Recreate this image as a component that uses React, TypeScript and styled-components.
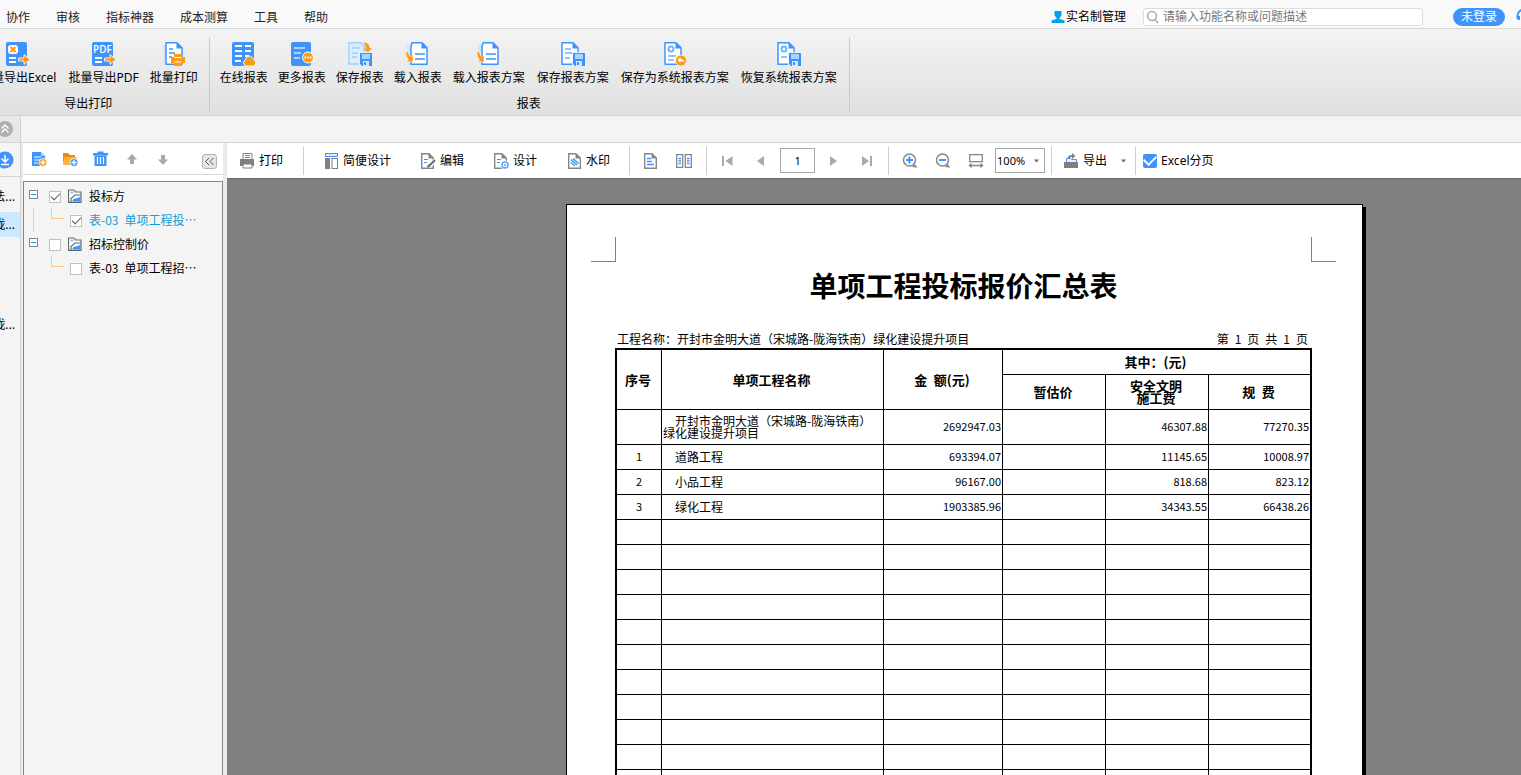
import React from 'react';
import styled, { createGlobalStyle } from 'styled-components';

const BLUE = '#3f94fb';
const ORANGE = '#ff9a14';
const GREY = '#808080';
const MUTED = '#a9a9a9';

const GlobalStyle = createGlobalStyle`
  * { box-sizing: border-box; }
  body {
    margin: 0;
    font: 12px/16px "Noto Sans", "Noto Sans CJK SC", sans-serif;
    color: #000;
    background: #f4f4f4;
  }
  button, input, select { font: inherit; color: inherit; }
  svg { display: block; flex: none; }
`;

const App = styled.div`
  display: flex;
  flex-direction: column;
  height: 100vh;
  overflow: hidden;
`;

/* ---------- menu bar ---------- */

const MenuBar = styled.header`
  display: flex;
  align-items: flex-start;
  flex: none;
  height: 29px;
  padding-top: 8px;
  background: #f9f9f9;
  border-bottom: 1px solid #d6d6d6;
  overflow: hidden;
`;

const Menus = styled.nav`
  display: flex;
  gap: 26px;
  padding: 2px 0 0 6px;
`;

const PlainButton = styled.button`
  flex: none;
  padding: 0;
  border: 0;
  background: none;
  white-space: nowrap;
`;

const MenuButton = styled(PlainButton)`
  color: #222;
`;

const Account = styled.div`
  display: flex;
  align-items: center;
  height: 18px;
  margin: 0 -11px 0 auto;
`;

const RealNameLink = styled.a`
  display: flex;
  align-items: center;
  gap: 1px;
  margin-right: 17px;
  color: #000;
  text-decoration: none;
  white-space: nowrap;
`;

const SearchBox = styled.label`
  display: flex;
  align-items: center;
  gap: 3px;
  width: 280px;
  height: 18px;
  padding-left: 2px;
  margin-right: 30px;
  border: 1px solid #dcdcdc;
  border-radius: 3px;
  background: #fff;
`;

const SearchInput = styled.input`
  flex: 1;
  min-width: 0;
  height: 16px;
  padding: 0;
  border: 0;
  outline: 0;
  background: none;
  &::placeholder { color: #777; }
`;

const LoginButton = styled.button`
  width: 52px;
  height: 18px;
  margin-right: 11px;
  padding: 0;
  border: 0;
  border-radius: 9px;
  background: ${BLUE};
  color: #fff;
`;

/* ---------- ribbon ---------- */

const Ribbon = styled.div`
  display: flex;
  flex: none;
  height: 87px;
  padding: 8px 0 3px;
  background: linear-gradient(#f3f3f3, #e0e0e0);
  border-bottom: 1px solid #cfcfcf;
  overflow: hidden;
`;

const RibbonGroup = styled.section<{ $scrolled?: boolean }>`
  display: flex;
  flex: none;
  flex-direction: column;
  align-items: center;
  margin-left: ${(p) => (p.$scrolled ? '-31px' : '0')};
  padding: 5px 6px 0 5px;
  border-right: 1px solid #cacaca;
`;

const RibbonButtons = styled.div`
  display: flex;
  margin-bottom: 10px;
`;

const RibbonButton = styled(PlainButton)<{ $wide?: boolean }>`
  display: flex;
  flex-direction: column;
  align-items: center;
  gap: 4px;
  padding: 0 ${(p) => (p.$wide ? 6 : 5)}px;
`;

/* ---------- work area ---------- */

const TabStrip = styled.div`
  display: flex;
  flex: none;
  height: 27px;
  border-bottom: 1px solid #d3d3d3;
  background: #f4f4f4;
`;

const RailToggle = styled.button`
  display: flex;
  align-items: center;
  justify-content: flex-end;
  width: 21px;
  padding: 0 6px 0 0;
  border: 0;
  border-right: 1px solid #d3d3d3;
  background: #e8e8e8;
  overflow: hidden;
`;

const WorkArea = styled.div`
  display: flex;
  flex: 1;
  min-height: 0;
`;

const Rail = styled.aside`
  flex: none;
  width: 21px;
  border-right: 1px solid #d3d3d3;
  overflow: hidden;
`;

const RailHead = styled.div`
  display: flex;
  align-items: center;
  justify-content: flex-end;
  height: 34px;
  padding-right: 6px;
  border-bottom: 1px solid #d3d3d3;
`;

const RailItem = styled.button<{ $selected?: boolean; $gap?: number }>`
  display: flex;
  align-items: center;
  justify-content: flex-end;
  width: 100%;
  height: 25px;
  margin-top: ${(p) => p.$gap ?? 0}px;
  padding: 1px 5px 0 0;
  border: 0;
  background: ${(p) => (p.$selected ? '#cce8ff' : 'none')};
  white-space: nowrap;
`;

const SidePanel = styled.aside`
  display: flex;
  flex: none;
  flex-direction: column;
  width: 206px;
  padding: 0 4px 0 2px;
  background: #ebebeb;
`;

const PanelTools = styled.div`
  display: flex;
  align-items: center;
  gap: 15px;
  flex: none;
  height: 32px;
  padding: 0 6px 0 8px;
  background: #fff;
  border-bottom: 1px solid #d8d8d8;
`;

const CollapseButton = styled.button`
  display: grid;
  place-items: center;
  align-self: flex-end;
  width: 15px;
  height: 15px;
  margin: 0 0 5px auto;
  padding: 0;
  border: 1px solid #b4b4b4;
  border-radius: 3px;
  background: #e6e6e6;
`;

const TreeFrame = styled.div`
  display: flex;
  flex: 1;
  min-height: 0;
  padding-top: 6px;
  background: #fff;
`;

const Tree = styled.ul`
  flex: 1;
  margin: 0;
  padding: 2px 0;
  border: 1px solid #828790;
  border-bottom: 0;
  background: #f4f4f4;
  list-style: none;
  font-family: "Noto Sans CJK SC", sans-serif;
`;

const SubTree = styled.ul`
  margin: 0;
  padding: 0;
  list-style: none;
`;

const TreeRow = styled.div<{ $child?: boolean }>`
  display: flex;
  align-items: center;
  height: 24px;
  padding-left: ${(p) => (p.$child ? 9 : 5)}px;
  white-space: nowrap;
`;

const Expander = styled.button`
  display: grid;
  place-items: center;
  width: 9px;
  height: 9px;
  margin: 0 11px 3px 0;
  padding: 0;
  border: 1px solid #7d8a93;
  background: #fff;
  &::before { content: ""; width: 5px; height: 1px; background: #1a9ad0; }
`;

const Trunk = styled.span<{ $visible: boolean }>`
  width: 1px;
  height: 24px;
  margin-right: 17px;
  background: ${(p) => (p.$visible ? '#ffc980' : 'transparent')};
`;

const Elbow = styled.span`
  align-self: flex-start;
  width: 13px;
  height: 11px;
  margin-right: 6px;
  border: solid #ffc980;
  border-width: 0 0 1px 1px;
`;

const TreeLabel = styled.label<{ $active?: boolean }>`
  display: flex;
  align-items: center;
  gap: 7px;
  color: ${(p) => (p.$active ? '#0aa1d9' : '#000')};
`;

const TreeCheck = styled.input`
  appearance: none;
  display: grid;
  place-items: center;
  flex: none;
  width: 12px;
  height: 12px;
  margin: 1px 0 0;
  border: 1px solid #c0c0c0;
  background: #fff;
  &:checked::before {
    content: "";
    width: 8px;
    height: 4px;
    margin-bottom: 2px;
    border: solid #555;
    border-width: 0 0 1px 1px;
    transform: rotate(-45deg);
  }
`;

/* ---------- report viewer ---------- */

const Viewer = styled.main`
  display: flex;
  flex: 1;
  flex-direction: column;
  min-width: 0;
`;

const ViewerTools = styled.div`
  display: flex;
  flex: none;
  height: 36px;
  padding: 3px 0;
  background: #fff;
  border-bottom: 1px solid #666;
  overflow: hidden;
`;

const ToolGroup = styled.div<{ $gap?: number; $left: number; $right?: number; $last?: boolean }>`
  display: flex;
  align-items: center;
  flex: none;
  gap: ${(p) => p.$gap ?? 0}px;
  padding: 0 ${(p) => p.$right ?? 0}px 0 ${(p) => p.$left}px;
  border-right: ${(p) => (p.$last ? 0 : 1)}px solid #cfcfcf;
`;

const IconPair = styled.div`
  display: flex;
  gap: 17px;
`;

const ToolButton = styled(PlainButton)`
  display: flex;
  align-items: center;
  gap: 4px;
`;

const PageInput = styled.input`
  width: 35px;
  height: 25px;
  padding: 0;
  border: 1px solid #a6a6a6;
  text-align: center;
  font-size: 11px;
`;

const ZoomField = styled.div`
  display: flex;
  align-items: center;
  width: 50px;
  height: 25px;
  padding-right: 5px;
  border: 1px solid #a6a6a6;
`;

const ZoomSelect = styled.select`
  appearance: none;
  flex: 1;
  min-width: 0;
  padding: 0 0 0 1px;
  border: 0;
  background: none;
  font-size: 11px;
`;

const ExcelLabel = styled.label`
  display: flex;
  align-items: center;
  gap: 4px;
`;

const ExcelCheck = styled.input`
  appearance: none;
  display: grid;
  place-items: center;
  width: 14px;
  height: 14px;
  margin: 0;
  border-radius: 2px;
  background: ${BLUE};
  &:checked::before {
    content: "";
    width: 10px;
    height: 6px;
    margin-bottom: 3px;
    border: solid #fff;
    border-width: 0 0 2px 2px;
    transform: rotate(-45deg);
  }
`;

const Canvas = styled.div`
  flex: 1;
  min-height: 0;
  padding: 25px 0 0 339px;
  background: #808080;
  overflow: hidden;
`;

const Sheet = styled.article`
  width: 797px;
  padding: 32px 26px 24px 24px;
  border: 1px solid #000;
  background: #fff;
  box-shadow: 3px 3px 0 #000;
  font-family: "Noto Sans CJK SC", sans-serif;
`;

const CropMarks = styled.div`
  display: flex;
  justify-content: space-between;
`;

const CropMark = styled.span<{ $side: 'left' | 'right' }>`
  width: 25px;
  height: 25px;
  border-bottom: 1px solid #808080;
  border-${(p) => (p.$side === 'left' ? 'right' : 'left')}: 1px solid #808080;
`;

const Title = styled.h1`
  margin: 3px 0 0;
  font-size: 28px;
  line-height: 40px;
  font-weight: 700;
  text-align: center;
`;

const InfoLine = styled.div`
  display: flex;
  justify-content: space-between;
  margin: 26px 28px 1px 26px;
`;

const Report = styled.table`
  width: 697px;
  margin-left: 24px;
  border: 2px solid #000;
  border-spacing: 0;
  table-layout: fixed;
  line-height: 12px;
`;

const Cell = styled.td<{ $align?: string; $small?: boolean }>`
  padding: 0 1px ${(p) => (p.$small ? 2 : 0)}px;
  border: solid #000;
  border-width: 0 1px 1px 0;
  text-align: ${(p) => p.$align ?? 'left'};
  font-size: ${(p) => (p.$small ? 11 : 12)}px;
  &:last-child { border-right: 0; }
`;

const HeadCell = styled.th<{ $edge?: boolean }>`
  padding: 0 2px 0 0;
  border: solid #000;
  border-width: 0 ${(p) => (p.$edge ? 0 : 1)}px 1px 0;
  font-size: 13px;
  font-weight: 700;
`;

const Row = styled.tr<{ $tall?: boolean }>`
  height: ${(p) => (p.$tall ? 35 : 25)}px;
`;

/* ---------- icons ---------- */

const Svg = ({ size = 16, children }: { size?: number; children: React.ReactNode }) => (
  <svg width={size} height={size} viewBox={`0 0 ${size} ${size}`} fill="none" aria-hidden="true">
    {children}
  </svg>
);

const OutArrow = () => (
  <path d="M12.500 16H18v-3.500l6 5-6 5V19h-5.500z" fill={ORANGE} stroke="#ececec" />
);

const Floppy = () => (
  <g>
    <rect x="11" y="10" width="13" height="14" fill="#e6f2ff" />
    <path d="M12 11h12v13H14l-2-2z" fill={BLUE} />
    <rect x="14" y="12" width="8" height="5" fill="#a6d3ff" />
    <rect x="15" y="19" width="6" height="5" fill="#d3e9ff" />
    <rect x="16" y="20" width="2" height="3" fill={BLUE} />
  </g>
);

const DocOutline = ({ x = 1 }: { x?: number }) => (
  <g transform={`translate(${x} 0)`}>
    <path d="M1 .8h11l5 5V22.200H1z" fill="#fff" stroke={BLUE} strokeWidth="1.500" strokeLinejoin="round" />
    <path d="M11.500.5v6H17.500z" fill={BLUE} />
  </g>
);

const ExcelOutIcon = () => (
  <Svg size={24}>
    <rect x="0" y="0" width="21" height="24" rx="2" fill={BLUE} />
    <rect x="2" y="3" width="10" height="9" rx="3" fill="#fff" />
    <path d="M4.500 5l5 5m0-5l-5 5" stroke={ORANGE} strokeWidth="2.200" />
    <path d="M3 16h7M3 20h7" stroke="#fff" strokeWidth="2" />
    <OutArrow />
  </Svg>
);

const PdfOutIcon = () => (
  <Svg size={24}>
    <rect x="0" y="0" width="21" height="24" rx="2" fill={BLUE} />
    <text x="10.500" y="11" fontSize="10" fontWeight="600" fill="#fff" textAnchor="middle" fontFamily="Open Sans, sans-serif">PDF</text>
    <path d="M3 16h7M3 20h7" stroke="#fff" strokeWidth="2" />
    <OutArrow />
  </Svg>
);

const BatchPrintIcon = () => (
  <Svg size={24}>
    <path d="M1 3h3v18H1z" fill="#cfe7ff" />
    <DocOutline x={3} />
    <path d="M7 7h4M7 11h6M7 15h3" stroke={BLUE} strokeWidth="1.500" />
    <path d="M12 12h8v3h3v6h-3v3h-8v-3H9v-6h3z" fill={ORANGE} />
    <path d="M12.500 15.500h7M12.500 20h7" stroke="#fff" />
  </Svg>
);

const OnlineIcon = () => (
  <Svg size={24}>
    <rect x="0" y="0" width="22" height="24" rx="2" fill={BLUE} />
    <path d="M3 4h7M13 4h6M3 9h7M13 9h6M3 14h7M13 14h4M3 19h6" stroke="#fff" strokeWidth="2" />
    <path d="M14 24a3.500 3.500 0 0 1-.5-6.500c1-4.500 7-4.500 8 0A3.500 3.500 0 0 1 21.500 24z" fill={ORANGE} stroke="#e9f3ff" />
  </Svg>
);

const MoreIcon = () => (
  <Svg size={24}>
    <rect x="1" y="0" width="20" height="24" rx="2" fill={BLUE} />
    <path d="M4 6h11M4 11h7M4 16h6" stroke="#cfe7ff" strokeWidth="1.500" />
    <circle cx="18" cy="15.500" r="5.500" fill={ORANGE} stroke="#fff" />
    <path d="M14.500 15.500h7" stroke="#fff" strokeWidth="2" strokeDasharray="1.500 1.200" />
  </Svg>
);

const SaveReportIcon = () => (
  <Svg size={24}>
    <path d="M1 .8h12l3 3V22H1z" fill="#dbeeff" stroke="#9fd0ff" strokeWidth="1.400" />
    <path d="M4 6h8M4 11h6M4 15h5" stroke="#9fd0ff" strokeWidth="1.500" />
    <path d="M15.500.5c4.500 0 6 2.500 6 5.500H24l-4 4.500L15 7h2.500c.5-2 0-4-2-6.500z" fill={ORANGE} />
    <Floppy />
  </Svg>
);

const LoadIcon = () => (
  <Svg size={24}>
    <path d="M1 2h4v9H1zM2 20h4v3H2z" fill="#cfe7ff" />
    <g transform="translate(4 0)">
      <path d="M2 .8h10l5 5V22.200H1V5z" fill="#fff" stroke={BLUE} strokeWidth="1.500" strokeLinejoin="round" />
      <path d="M11.500.5v6H17.500z" fill={BLUE} />
    </g>
    <path d="M9 12h10M9 17h10" stroke={BLUE} strokeWidth="1.600" />
    <path d="M0 10l2.500-.5c0 3 1 4.500 3 5l1.500-2V20l-7-.5 2.500-2C.5 16 0 13 0 10z" fill={ORANGE} stroke="#fff" strokeWidth=".5" />
  </Svg>
);

const SaveSchemeIcon = () => (
  <Svg size={24}>
    <DocOutline x={0} />
    <path d="M4 7h6M4 11h7M4 16h5" stroke="#6db1ff" strokeWidth="1.500" />
    <Floppy />
  </Svg>
);

const SystemSchemeIcon = () => (
  <Svg size={24}>
    <DocOutline />
    <circle cx="8" cy="7" r="2.500" stroke="#6db1ff" strokeWidth="2" />
    <path d="M5 14h8M5 18h6" stroke="#6db1ff" strokeWidth="1.500" />
    <circle cx="18" cy="18.500" r="5.500" fill={ORANGE} stroke="#fff" strokeWidth=".6" />
    <path d="M14.500 18l3-3v2c2 0 4 1 4 4-1-1.500-2-2-4-2v2z" fill="#fff" />
  </Svg>
);

const RestoreSchemeIcon = () => (
  <Svg size={24}>
    <DocOutline x={0} />
    <circle cx="7" cy="7" r="2.500" stroke="#6db1ff" strokeWidth="2" />
    <path d="M4 15h6" stroke="#6db1ff" strokeWidth="1.500" />
    <Floppy />
  </Svg>
);

const PersonIcon = () => (
  <svg width="14" height="14" viewBox="0 0 14 14" fill="#00a2e8" aria-hidden="true">
    <path d="M3.500 1h7v4.500l-2 2.500v1l5 1.500V13H.5v-2.500L5.500 9V8l-2-2.500z" />
  </svg>
);

const SearchIcon = () => (
  <svg width="14" height="14" viewBox="0 0 14 14" fill="none" stroke="#aaa" strokeWidth="1.500" aria-hidden="true">
    <circle cx="6" cy="6" r="4.500" />
    <path d="M9 9.500l3 3.500" />
  </svg>
);

const HeadsetIcon = () => (
  <Svg>
    <path d="M1.500 10V7a6.500 6.500 0 0 1 13 0v3" stroke={BLUE} strokeWidth="2" />
    <path d="M1 7h3v4H2z" fill={BLUE} />
  </Svg>
);

const CircleUpIcon = () => (
  <svg width="18" height="18" viewBox="0 0 18 18" fill="none" aria-hidden="true">
    <circle cx="9" cy="9" r="8" fill="#b0b0b0" />
    <path d="M5.500 8.500L9 5l3.500 3.500M5.500 12.500L9 9l3.500 3.500" stroke="#fff" strokeWidth="1.400" />
  </svg>
);

const CircleDownIcon = () => (
  <svg width="18" height="18" viewBox="0 0 18 18" fill="none" aria-hidden="true">
    <circle cx="9" cy="9" r="8.500" fill={BLUE} />
    <path d="M9 4v7M5.500 7.500L9 11l3.500-3.500M5 13.500h8" stroke="#fff" strokeWidth="1.500" />
  </svg>
);

const PlusBadge = ({ color }: { color: string }) => (
  <g>
    <circle cx="12" cy="11.500" r="4" fill={color} stroke="#fff" strokeWidth=".8" />
    <path d="M12 9v5M9.500 11.500h5" stroke="#fff" strokeWidth="1.300" />
  </g>
);

const AddDocIcon = () => (
  <Svg>
    <path d="M1 1h9l4 4v10H1z" fill={BLUE} />
    <path d="M10 1v4h4z" fill="#a6d3ff" />
    <path d="M3 6h7M3 9h6M3 12h4" stroke="#fff" />
    <PlusBadge color={ORANGE} />
  </Svg>
);

const AddFolderIcon = () => (
  <Svg>
    <path d="M1 2h5l2 2h5v2H3L1 13z" fill="#f08a00" />
    <path d="M3 6h12l-2 8H1z" fill="#ffb13c" />
    <PlusBadge color={BLUE} />
  </Svg>
);

const TrashIcon = () => (
  <Svg>
    <path d="M4.500.5h6V2H15v2.500H0V2h4.500z" fill={BLUE} />
    <path d="M1.500 4.500h12V15h-12z" fill={BLUE} />
    <path d="M4.500 6v7M7.500 6v7M10.500 6v7" stroke="#fff" strokeWidth="1.200" />
  </Svg>
);

const ArrowUpIcon = () => (
  <Svg>
    <path d="M8 3l5 5.500h-3V13H6V8.500H3z" fill="#a8a8a8" />
  </Svg>
);

const ArrowDownIcon = () => (
  <Svg>
    <path d="M8 14l5-5.500h-3V4H6v4.500H3z" fill="#a8a8a8" />
  </Svg>
);

const ChevronsLeftIcon = () => (
  <svg width="11" height="11" viewBox="0 0 11 11" fill="none" stroke="#555" aria-hidden="true">
    <path d="M5 2L1.500 5.500 5 9M9.500 2L6 5.500 9.500 9" />
  </svg>
);

const BookIcon = () => (
  <svg width="14" height="14" viewBox="0 0 14 14" fill="none" aria-hidden="true">
    <path d="M.6 12.500V1H6l1.500 2H13v10.400H.6z" fill="#fff" stroke="#5d6670" strokeWidth="1.100" />
    <path d="M2.500 3.500h3" stroke="#8fc5ff" strokeWidth="2" />
    <path d="M3 13V9.500L7 6h6" stroke="#5d6670" strokeWidth="1.100" />
    <path d="M4.500 12.500c0-2.500 1.500-3 3.500-3 1.500 0 2-1.500 4.500-1.500v4.500z" fill={BLUE} />
  </svg>
);

const PrintIcon = () => (
  <Svg>
    <path d="M4 .5h9V7H4z" fill="#fff" stroke={GREY} />
    <path d="M6 2.500h5M6 4.500h5" stroke={BLUE} />
    <path d="M1 6h14v7H1z" fill={GREY} />
    <path d="M4 11h9v4H4z" fill="#fff" stroke={GREY} />
  </Svg>
);

const SimpleDesignIcon = () => (
  <Svg>
    <rect x="2.500" y=".5" width="12" height="3" fill="#d6eaff" stroke={BLUE} />
    <rect x="2" y="5" width="5" height="11" fill={GREY} />
    <rect x="9" y="5.500" width="5.500" height="10" stroke={GREY} />
  </Svg>
);

const GreyDoc = () => (
  <g>
    <path d="M1.700.7H9l4.300 4.300v10.300H1.700z" fill="#fff" stroke="#868686" strokeWidth="1.400" />
    <path d="M8.500.5V5.500h5z" fill="#868686" />
  </g>
);

const EditIcon = () => (
  <Svg>
    <GreyDoc />
    <path d="M4 6.500h4M4 9.500h3" stroke={BLUE} />
    <path d="M15 7.500L9 13.500" stroke="#fff" strokeWidth="4" />
    <path d="M15 7L9.500 12.500 7.500 14" stroke="#6e6e6e" strokeWidth="2.200" />
  </Svg>
);

const DesignIcon = () => (
  <Svg>
    <GreyDoc />
    <path d="M4 6.500h4M4 9.500h3" stroke={BLUE} />
    <circle cx="12" cy="12" r="4.500" fill="#fff" />
    <circle cx="12" cy="12" r="3" stroke="#55a5ff" strokeWidth="1.500" />
    <circle cx="12" cy="12" r="1" fill="#55a5ff" />
  </Svg>
);

const WatermarkIcon = () => (
  <Svg>
    <g transform="translate(1 0)">
      <GreyDoc />
      <path d="M6 5.500l5.500 5M4 6.500l6 5.500M4 9.500l4 3.500" stroke={BLUE} strokeWidth="1.500" />
    </g>
  </Svg>
);

const SinglePageIcon = () => (
  <Svg>
    <GreyDoc />
    <path d="M4 5.500h4M4 8.500h5M4 11.500h7" stroke={BLUE} strokeWidth="1.500" />
  </Svg>
);

const TwoPageIcon = () => (
  <Svg>
    <path d="M.7 1.700h6v12.600h-6zM9.300 1.700h6v12.600h-6z" stroke="#868686" strokeWidth="1.300" />
    <path d="M2.500 5.500h2.500M2.500 8h2.500M2.500 10.500h2.500M11 5.500h2.500M11 8h2.500M11 10.500h2.500" stroke={BLUE} strokeWidth="1.300" />
  </Svg>
);

const FirstIcon = () => (
  <Svg>
    <path d="M12.500 3v10L5.500 8zM2 3h2v10H2z" fill={MUTED} />
  </Svg>
);
const PrevIcon = () => (
  <Svg>
    <path d="M11 3v10L4 8z" fill={MUTED} />
  </Svg>
);
const NextIcon = () => (
  <Svg>
    <path d="M4 3v10l7-5z" fill={MUTED} />
  </Svg>
);
const LastIcon = () => (
  <Svg>
    <path d="M3 3v10l7-5zM11 3h2v10h-2z" fill={MUTED} />
  </Svg>
);

const Magnifier = ({ plus }: { plus?: boolean }) => (
  <Svg>
    <circle cx="7.500" cy="7" r="6" stroke="#868686" strokeWidth="1.500" />
    <path d="M11.500 11l3 3.500M10.500 13.500h4" stroke="#868686" strokeWidth="1.500" />
    <path d={plus ? 'M4 7h7M7.500 3.500v7' : 'M4 7h7'} stroke={BLUE} strokeWidth="2" />
  </Svg>
);

const FitWidthIcon = () => (
  <Svg>
    <path d="M1.700 1.700h12.600v7H1.700zM1 12.500h14M3.500 10.500l-2 2 2 2M12.500 10.500l2 2-2 2" stroke="#868686" strokeWidth="1.300" />
  </Svg>
);

const ExportIcon = () => (
  <Svg>
    <path d="M3.500 10V5.500h4l1.500 1h4.500V10" fill="#e4f1ff" stroke={BLUE} />
    <path d="M1 9h14v6H1z" fill={GREY} />
    <path d="M4.500 6c0-3 2-4 4.500-4V0l3.500 3L9 6V4C7.500 4 6.500 4.500 6.500 6z" fill={GREY} />
  </Svg>
);

const Caret = () => (
  <svg width="5" height="4" viewBox="0 0 5 4" fill="#666" aria-hidden="true">
    <path d="M0 .5h5L2.500 3.500z" />
  </svg>
);

/* ---------- data ---------- */

type RibbonAction = { label: string; icon: React.ReactNode; wide?: boolean };

const exportActions: RibbonAction[] = [
  { label: '批量导出Excel', icon: <ExcelOutIcon />, wide: true },
  { label: '批量导出PDF', icon: <PdfOutIcon />, wide: true },
  { label: '批量打印', icon: <BatchPrintIcon /> },
];

const reportActions: RibbonAction[] = [
  { label: '在线报表', icon: <OnlineIcon /> },
  { label: '更多报表', icon: <MoreIcon /> },
  { label: '保存报表', icon: <SaveReportIcon /> },
  { label: '载入报表', icon: <LoadIcon /> },
  { label: '载入报表方案', icon: <LoadIcon />, wide: true },
  { label: '保存报表方案', icon: <SaveSchemeIcon />, wide: true },
  { label: '保存为系统报表方案', icon: <SystemSchemeIcon />, wide: true },
  { label: '恢复系统报表方案', icon: <RestoreSchemeIcon />, wide: true },
];

const treeData = [
  { label: '投标方', checked: true, child: '表-03\u2002单项工程投…', active: true },
  { label: '招标控制价', checked: false, child: '表-03\u2002单项工程招…', active: false },
];

const reportRows = [
  ['', '\u3000开封市金明大道（宋城路-陇海铁南）绿化建设提升项目', '2692947.03', '', '46307.88', '77270.35'],
  ['1', '\u3000道路工程', '693394.07', '', '11145.65', '10008.97'],
  ['2', '\u3000小品工程', '96167.00', '', '818.68', '823.12'],
  ['3', '\u3000绿化工程', '1903385.96', '', '34343.55', '66438.26'],
  ...Array.from({ length: 18 }, () => ['', '', '', '', '', '']),
];

const columnWidths = [45, 222, 119, 103, 103, 101];

const RibbonSection = ({ title, actions, scrolled }: { title: string; actions: RibbonAction[]; scrolled?: boolean }) => (
  <RibbonGroup $scrolled={scrolled}>
    <RibbonButtons>
      {actions.map((a) => (
        <RibbonButton key={a.label} $wide={a.wide}>
          {a.icon}
          {a.label}
        </RibbonButton>
      ))}
    </RibbonButtons>
    {title}
  </RibbonGroup>
);

export default function ReportApp() {
  return (
    <App>
      <GlobalStyle />
      <MenuBar>
        <Menus>
          {['协作', '审核', '指标神器', '成本测算', '工具', '帮助'].map((m) => (
            <MenuButton key={m}>{m}</MenuButton>
          ))}
        </Menus>
        <Account>
          <RealNameLink href="#real-name">
            <PersonIcon />
            实名制管理
          </RealNameLink>
          <SearchBox>
            <SearchIcon />
            <SearchInput aria-label="搜索" placeholder="请输入功能名称或问题描述" />
          </SearchBox>
          <LoginButton>未登录</LoginButton>
          <HeadsetIcon />
        </Account>
      </MenuBar>

      <Ribbon>
        <RibbonSection title="导出打印" actions={exportActions} scrolled />
        <RibbonSection title="报表" actions={reportActions} />
      </Ribbon>

      <TabStrip>
        <RailToggle aria-label="收起">
          <CircleUpIcon />
        </RailToggle>
      </TabStrip>

      <WorkArea>
        <Rail>
          <RailHead>
            <CircleDownIcon />
          </RailHead>
          <RailItem $gap={7}>法...</RailItem>
          <RailItem $gap={3} $selected>陇...</RailItem>
          <RailItem $gap={75}>陇...</RailItem>
        </Rail>

        <SidePanel>
          <PanelTools>
            <PlainButton aria-label="新建报表"><AddDocIcon /></PlainButton>
            <PlainButton aria-label="新建文件夹"><AddFolderIcon /></PlainButton>
            <PlainButton aria-label="删除"><TrashIcon /></PlainButton>
            <PlainButton aria-label="上移"><ArrowUpIcon /></PlainButton>
            <PlainButton aria-label="下移"><ArrowDownIcon /></PlainButton>
            <CollapseButton aria-label="折叠"><ChevronsLeftIcon /></CollapseButton>
          </PanelTools>
          <TreeFrame>
            <Tree>
              {treeData.map((node) => (
                <li key={node.label}>
                  <TreeRow>
                    <Expander aria-label="折叠节点" />
                    <TreeLabel>
                      <TreeCheck type="checkbox" defaultChecked={node.checked} />
                      <BookIcon />
                      {node.label}
                    </TreeLabel>
                  </TreeRow>
                  <SubTree>
                    <li>
                      <TreeRow $child>
                        <Trunk $visible={node.active} />
                        <Elbow />
                        <TreeLabel $active={node.active}>
                          <TreeCheck type="checkbox" defaultChecked={node.checked} />
                          {node.child}
                        </TreeLabel>
                      </TreeRow>
                    </li>
                  </SubTree>
                </li>
              ))}
            </Tree>
          </TreeFrame>
        </SidePanel>

        <Viewer>
          <ViewerTools>
            <ToolGroup $left={12} $right={20}>
              <ToolButton><PrintIcon />打印</ToolButton>
            </ToolGroup>
            <ToolGroup $left={19} $right={19} $gap={29}>
              <ToolButton><SimpleDesignIcon />简便设计</ToolButton>
              <ToolButton><EditIcon />编辑</ToolButton>
              <ToolButton><DesignIcon />设计</ToolButton>
              <ToolButton><WatermarkIcon />水印</ToolButton>
            </ToolGroup>
            <ToolGroup $left={13} $right={14} $gap={17}>
              <ToolButton aria-label="单页"><SinglePageIcon /></ToolButton>
              <ToolButton aria-label="双页"><TwoPageIcon /></ToolButton>
            </ToolGroup>
            <ToolGroup $left={13} $right={13} $gap={11}>
              <IconPair>
                <ToolButton aria-label="首页"><FirstIcon /></ToolButton>
                <ToolButton aria-label="上一页"><PrevIcon /></ToolButton>
              </IconPair>
              <PageInput aria-label="页码" defaultValue="1" />
              <IconPair>
                <ToolButton aria-label="下一页"><NextIcon /></ToolButton>
                <ToolButton aria-label="末页"><LastIcon /></ToolButton>
              </IconPair>
            </ToolGroup>
            <ToolGroup $left={13} $right={6} $gap={11}>
              <IconPair>
                <ToolButton aria-label="放大"><Magnifier plus /></ToolButton>
                <ToolButton aria-label="缩小"><Magnifier /></ToolButton>
                <ToolButton aria-label="适合宽度"><FitWidthIcon /></ToolButton>
              </IconPair>
              <ZoomField>
                <ZoomSelect aria-label="缩放比例" defaultValue="100%">
                  <option>100%</option>
                </ZoomSelect>
                <Caret />
              </ZoomField>
            </ToolGroup>
            <ToolGroup $left={11} $right={9} $gap={14}>
              <ToolButton><ExportIcon />导出</ToolButton>
              <ToolButton aria-label="导出选项"><Caret /></ToolButton>
            </ToolGroup>
            <ToolGroup $left={7} $last>
              <ExcelLabel>
                <ExcelCheck type="checkbox" defaultChecked />
                Excel分页
              </ExcelLabel>
            </ToolGroup>
          </ViewerTools>

          <Canvas>
            <Sheet>
              <CropMarks>
                <CropMark $side="left" />
                <CropMark $side="right" />
              </CropMarks>
              <Title>单项工程投标报价汇总表</Title>
              <InfoLine>
                <span>工程名称：开封市金明大道（宋城路-陇海铁南）绿化建设提升项目</span>
                <span>{'第\u20021\u2002页\u2002共\u20021\u2002页'}</span>
              </InfoLine>
              <Report>
                <colgroup>
                  {columnWidths.map((w, i) => (
                    <col key={i} width={w} />
                  ))}
                </colgroup>
                <thead>
                  <Row>
                    <HeadCell rowSpan={2}>序号</HeadCell>
                    <HeadCell rowSpan={2}>单项工程名称</HeadCell>
                    <HeadCell rowSpan={2}>{'金\u2002额(元)'}</HeadCell>
                    <HeadCell colSpan={3} $edge>其中：(元)</HeadCell>
                  </Row>
                  <Row $tall>
                    <HeadCell>暂估价</HeadCell>
                    <HeadCell>安全文明<br />施工费</HeadCell>
                    <HeadCell $edge>{'规\u2002费'}</HeadCell>
                  </Row>
                </thead>
                <tbody>
                  {reportRows.map((cells, r) => (
                    <Row key={r} $tall={r === 0}>
                      {cells.map((text, c) => (
                        <Cell key={c} $align={c === 0 ? 'center' : c === 1 ? 'left' : 'right'} $small={c !== 1}>
                          {text}
                        </Cell>
                      ))}
                    </Row>
                  ))}
                </tbody>
              </Report>
            </Sheet>
          </Canvas>
        </Viewer>
      </WorkArea>
    </App>
  );
}
